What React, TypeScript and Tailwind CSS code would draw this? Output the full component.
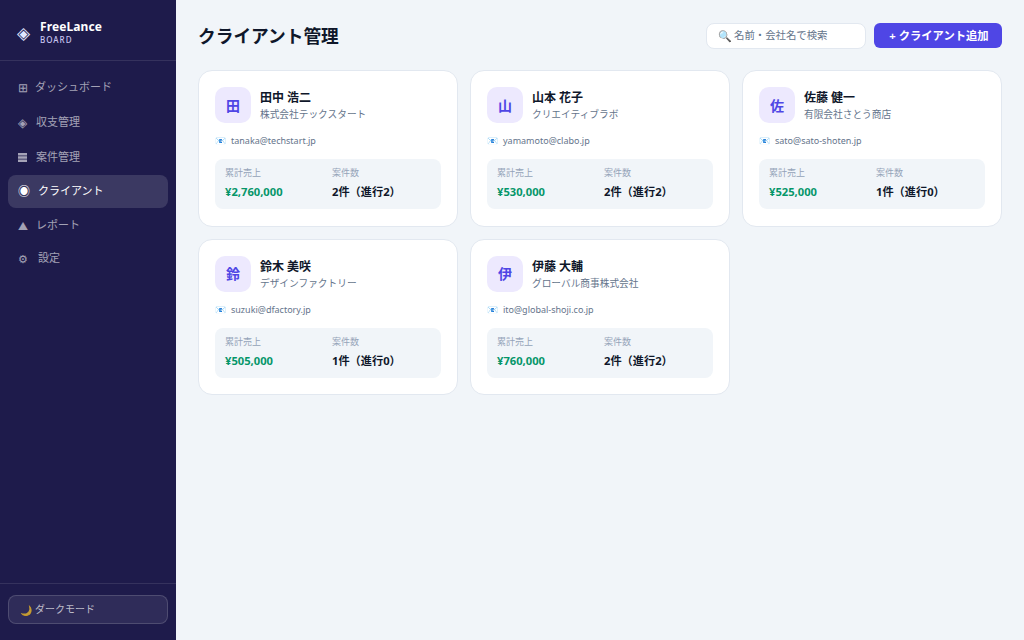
const navItems = [
  { icon: "⊞", label: "ダッシュボード", h: "h-[33px]", w: "w-[17px] text-[12px]" },
  { icon: "◈", label: "収支管理", h: "h-[33px]", w: "w-[18px] text-[12px]" },
  { icon: "grid", label: "案件管理", h: "h-[32px]", w: "w-[18px] text-[10px]" },
  { icon: "◉", label: "クライアント", h: "h-[33px]", w: "w-[20px] text-[12px]", active: true },
  { icon: "▲", label: "レポート", h: "h-[31px]", w: "w-[18px] text-[10px]" },
  { icon: "⚙", label: "設定", h: "h-[31px]", w: "w-[20px] text-[11px]" },
];

const clients = [
  { initial: "田", name: "田中 浩二", company: "株式会社テックスタート", email: "tanaka@techstart.jp", sales: "¥2,760,000", jobs: "2件（進行2）" },
  { initial: "山", name: "山本 花子", company: "クリエイティブラボ", email: "yamamoto@clabo.jp", sales: "¥530,000", jobs: "2件（進行2）" },
  { initial: "佐", name: "佐藤 健一", company: "有限会社さとう商店", email: "sato@sato-shoten.jp", sales: "¥525,000", jobs: "1件（進行0）" },
  { initial: "鈴", name: "鈴木 美咲", company: "デザインファクトリー", email: "suzuki@dfactory.jp", sales: "¥505,000", jobs: "1件（進行0）" },
  { initial: "伊", name: "伊藤 大輔", company: "グローバル商事株式会社", email: "ito@global-shoji.co.jp", sales: "¥760,000", jobs: "2件（進行2）" },
];

// dense block icon, the glyph comes out too pale at this size
function GridIcon() {
  return (
    <svg width="9" height="9" viewBox="0 0 9 9" fill="currentColor">
      <rect x="0" y="0" width="9" height="2.5" />
      <rect x="0" y="3.25" width="9" height="2.5" />
      <rect x="0" y="6.5" width="9" height="2.5" />
    </svg>
  );
}

function Sidebar() {
  return (
    <aside className="w-[176px] shrink-0 h-full flex flex-col bg-[#1e1b4b]">
      <div className="h-[61px] flex items-center gap-[10px] pl-[17px] pt-1 border-b border-white/10">
        <span className="text-[17px] text-[#e0e7ff] leading-none">◈</span>
        <div>
          <div className="text-[12px] font-bold text-white leading-[15px] tracking-[0.1px]">FreeLance</div>
          <div className="text-[8px] font-medium text-[#c7c4f0] leading-[11px] tracking-[1px]">BOARD</div>
        </div>
      </div>
      <nav className="flex-1 flex flex-col gap-[2px] px-2 py-[10px]">
        {navItems.map((item) => (
          <div
            key={item.label}
            className={`${item.h} flex items-center px-[10px] rounded-lg text-[11px] ${
              item.active ? "bg-white/[0.13] text-white" : "text-white/60"
            }`}
          >
            <span className={`${item.w} leading-none`}>
              {item.icon === "grid" ? <GridIcon /> : item.icon}
            </span>
            <span>{item.label}</span>
          </div>
        ))}
      </nav>
      <div className="px-2 pt-[11px] pb-[16px] border-t border-white/10">
        <div className="h-[29px] flex items-center gap-[3px] px-[11px] rounded-lg border border-white/15 bg-white/[0.08] text-[10px] text-white/70">
          <span className="text-[10px] leading-none">🌙</span>
          <span>ダークモード</span>
        </div>
      </div>
    </aside>
  );
}

function ClientCard({ client }: { client: (typeof clients)[number] }) {
  return (
    <div className="bg-white rounded-[14px] border border-[#e2e8f0] px-4 pt-4 pb-[16.5px]">
      <div className="flex items-center gap-[9px] mb-[10px]">
        <div className="w-9 h-9 rounded-[10px] bg-[#ede9fe] flex items-center justify-center text-[14px] font-bold text-[#4f46e5]">
          {client.initial}
        </div>
        <div>
          <div className="text-[12px] font-bold text-[#0f172a] leading-[18px] pt-[1px]">{client.name}</div>
          <div className="text-[9.7px] text-[#64748b] leading-[15px]">{client.company}</div>
        </div>
      </div>
      <div className="flex items-center gap-[5px] text-[9px] text-[#64748b] leading-[15px] mb-[11px]">
        <span className="text-[9px] leading-none">📧</span>
        <span>{client.email}</span>
      </div>
      <div className="grid grid-cols-2 gap-2 rounded-lg bg-[#f1f5f9] px-[10px] pt-[7px] pb-[9px]">
        <div>
          <div className="text-[9px] text-[#94a3b8] leading-[14px] mb-[3px]">累計売上</div>
          <div className="text-[11.2px] font-bold text-[#059669] leading-[17px]">{client.sales}</div>
        </div>
        <div>
          <div className="text-[9px] text-[#94a3b8] leading-[14px] mb-[3px]">案件数</div>
          <div className="text-[11.2px] font-bold text-[#0f172a] leading-[17px]">{client.jobs}</div>
        </div>
      </div>
    </div>
  );
}

export default function App() {
  return (
    <div className="flex h-screen w-screen overflow-hidden bg-[#f1f5f9] font-['Noto_Sans','Noto_Sans_CJK_JP',sans-serif]">
      <Sidebar />
      <main className="flex-1 px-[22px] pt-[22px]">
        <div className="flex items-center justify-between h-[27px] mb-[21px]">
          <h1 className="text-[17.7px] font-bold text-[#0f172a] pt-[2px]">クライアント管理</h1>
          <div className="flex items-center gap-2">
            <div className="w-[160px] h-[26px] flex items-center gap-[2px] px-[11px] rounded-lg border border-[#e2e8f0] bg-white text-[10.4px] text-[#64748b]">
              <span className="text-[11px] leading-none">🔍</span>
              <span className="pt-[1px]">名前・会社名で検索</span>
            </div>
            <button className="w-[128px] h-[25px] rounded-md bg-[#4f46e5] text-[11.3px] font-bold text-white pt-[1px] pl-[2px]">
              + クライアント追加
            </button>
          </div>
        </div>
        <div className="grid grid-cols-3 gap-3">
          {clients.map((c) => (
            <ClientCard key={c.email} client={c} />
          ))}
        </div>
      </main>
    </div>
  );
}
